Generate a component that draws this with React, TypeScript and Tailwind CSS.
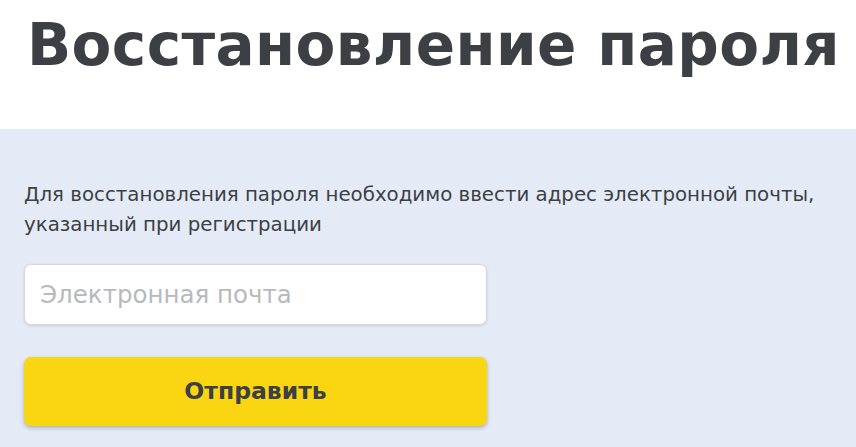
import React from "react";

export default function App() {
  return (
    <div className="w-[856px] h-[447px] overflow-hidden bg-white" style={{ fontFamily: '"DejaVu Sans", "Noto Sans", sans-serif' }}>
      <div className="h-[129px] pl-[27px] pt-[5px]">
        <h1 className="text-[58px] leading-[80px] font-bold text-[#3c3f44] tracking-[0.4px] whitespace-nowrap">
          Восстановление пароля
        </h1>
      </div>
      <div className="h-[318px] bg-[#e4ebf7] px-6 pt-[51px]">
        <p className="text-[19.8px] leading-[30px] text-[#3c3f44] w-[810px]">
          Для восстановления пароля необходимо ввести адрес электронной почты, указанный при регистрации
        </p>
        <input
          type="text"
          placeholder="Электронная почта"
          className="mt-[24px] block w-[463px] h-[61px] rounded-[7px] border border-[#d5d9de] bg-white px-[15px] text-[24.5px] text-[#3c3f44] placeholder:text-[#b6babe] shadow-[0_1px_3px_rgba(0,0,0,0.12)] outline-none"
        />
        <button className="mt-[32px] block w-[463px] h-[69px] rounded-[7px] bg-[#f9d512] text-[23.5px] font-bold text-[#3c3f44] shadow-[0_2px_4px_rgba(0,0,0,0.25)]">
          Отправить
        </button>
      </div>
    </div>
  );
}
